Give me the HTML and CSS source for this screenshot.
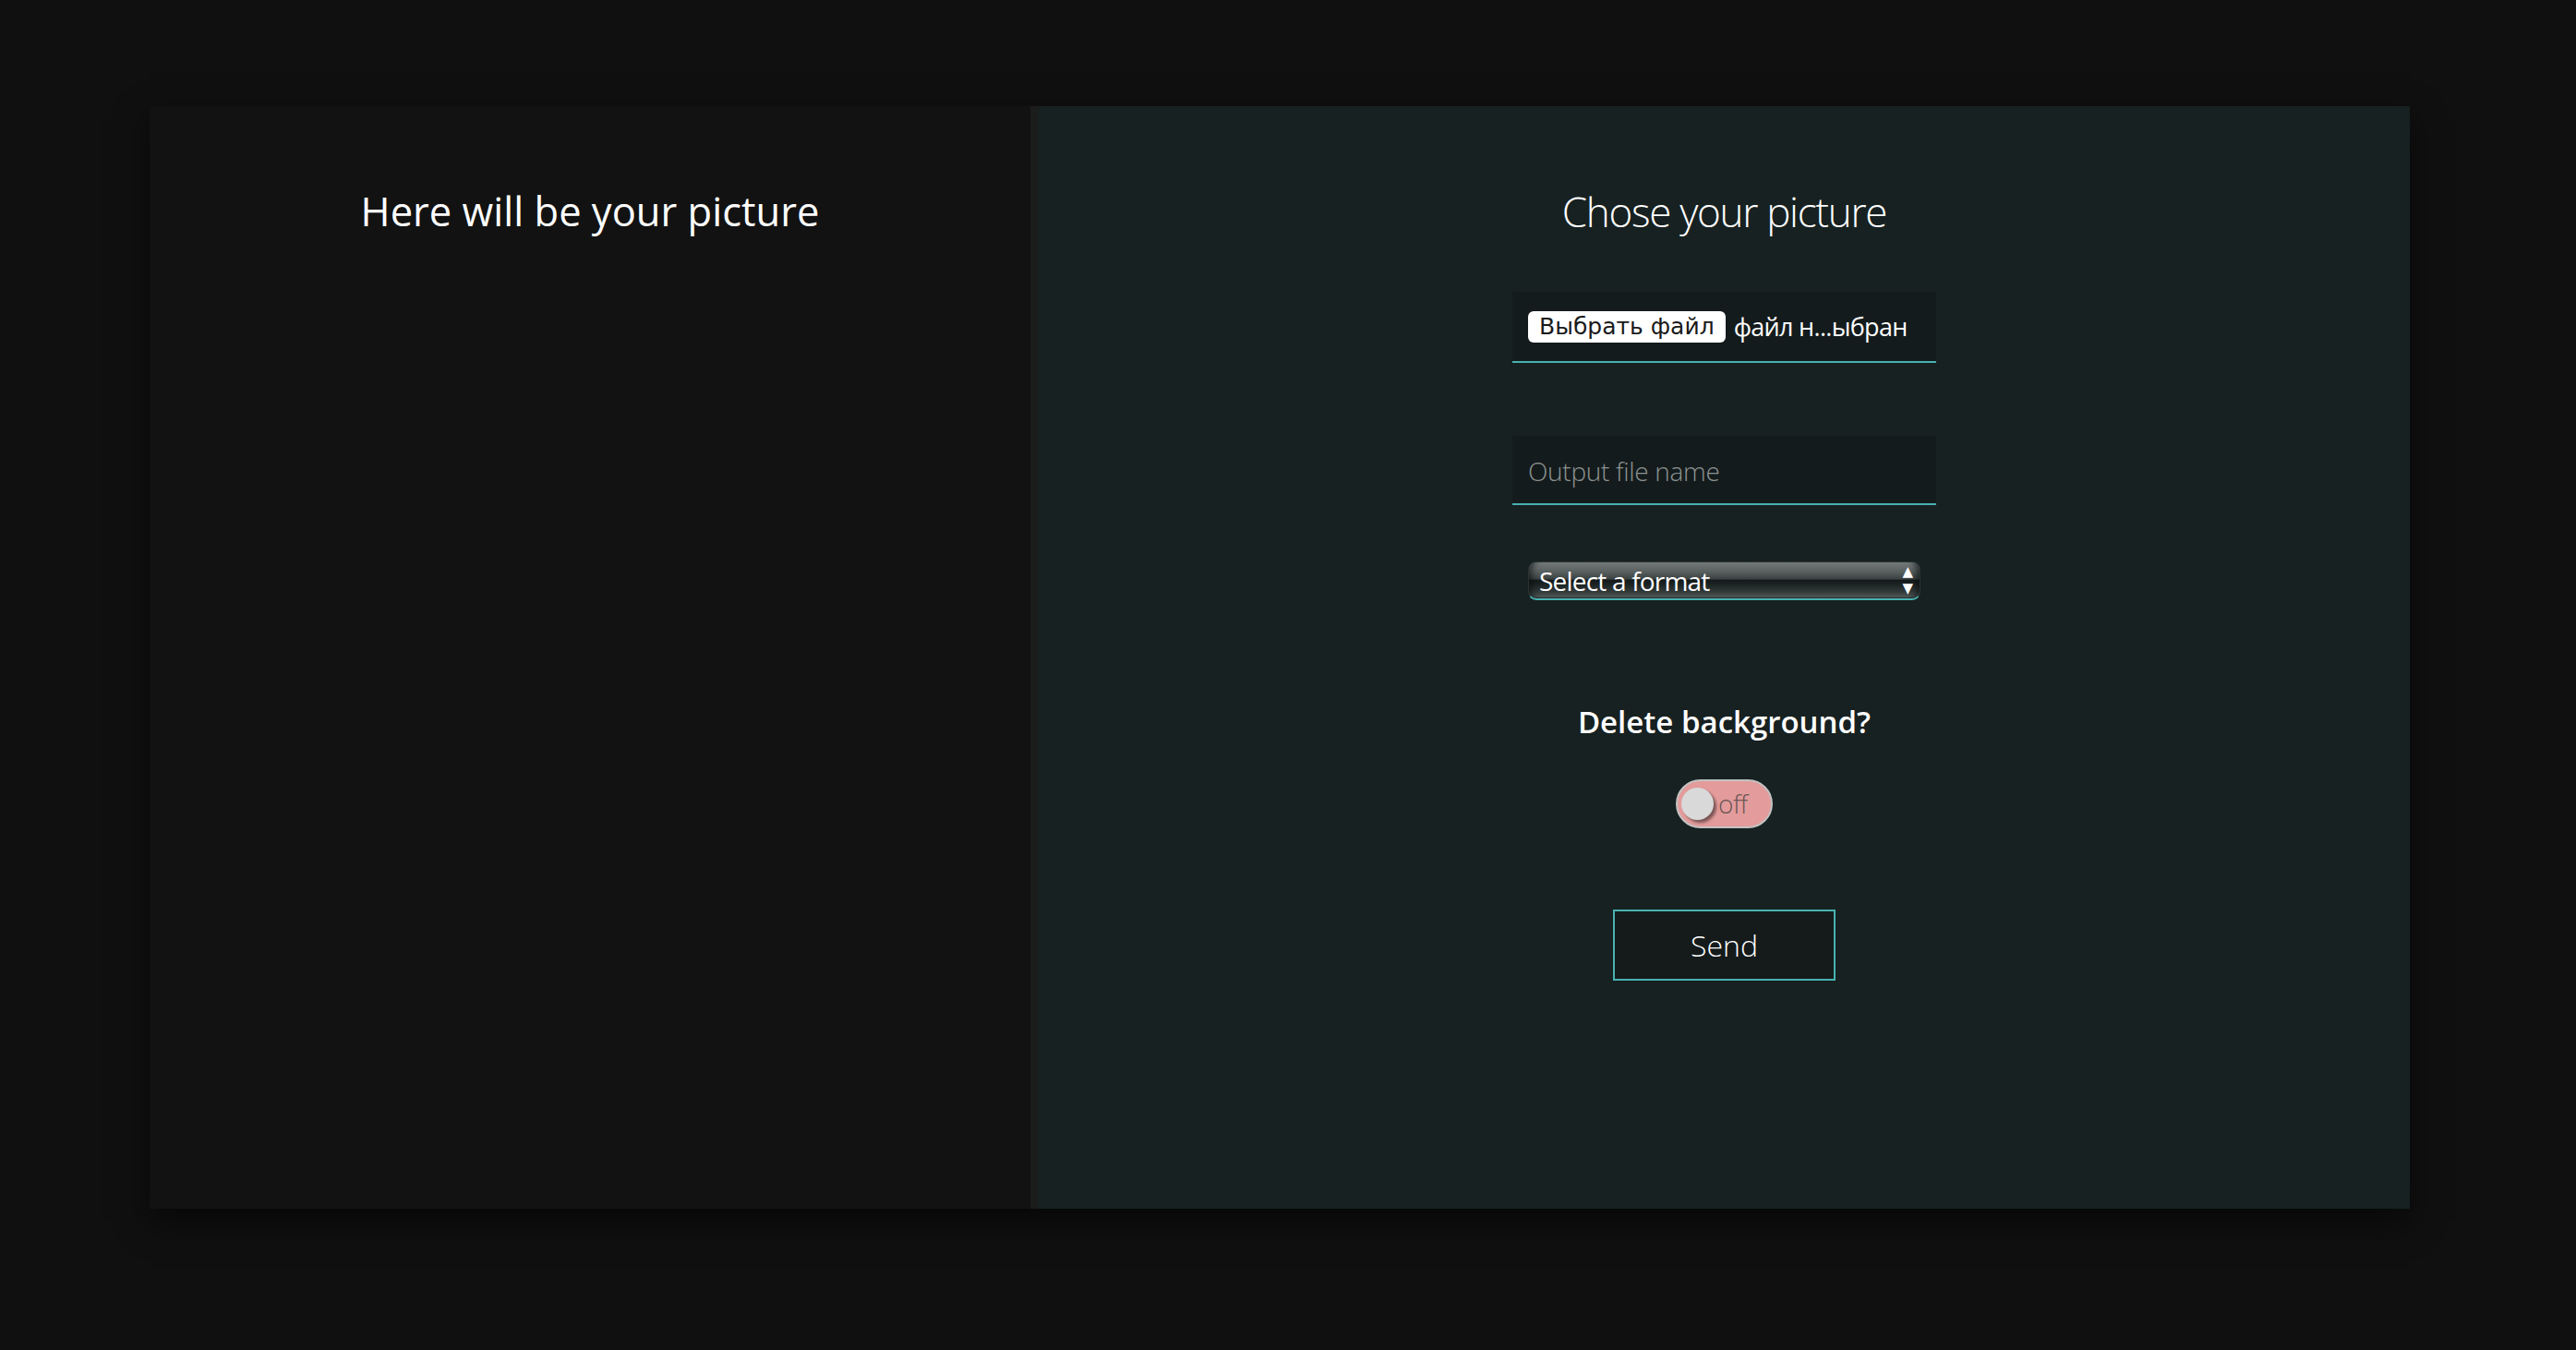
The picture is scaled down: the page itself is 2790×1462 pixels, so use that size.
FILE: index.html
```html
<!DOCTYPE html>
<html lang="ru">
<head>
<meta charset="utf-8">
<title>Picture converter</title>
<link rel="stylesheet" href="styles.css">
</head>
<body>
<div class="page">
  <div class="card">
    <section class="preview">
      <h2 class="title">Here will be your picture</h2>
    </section>
    <section class="form">
      <h2 class="title light">Chose your picture</h2>
      <div class="field file-field">
        <label class="file-btn">Выбрать файл</label>
        <span class="file-name">файл н...ыбран</span>
      </div>
      <div class="field text-field">
        <input class="text-input" type="text" placeholder="Output file name">
      </div>
      <div class="select-wrap">
        <select class="format-select">
          <option>Select a format</option>
        </select>
        <span class="select-arrows"><span>&#9650;</span><span>&#9660;</span></span>
      </div>
      <h3 class="question">Delete background?</h3>
      <div class="toggle">
        <span class="knob"></span>
        <span class="toggle-label">off</span>
      </div>
      <button class="send">Send</button>
    </section>
  </div>
</div>
</body>
</html>
```
FILE: styles.css
```css
html, body {
  margin: 0;
  padding: 0;
}
body {
  background: #101010;
  font-family: "Open Sans", "Noto Sans", sans-serif;
  color: #ffffff;
  width: 2790px;
  height: 1462px;
  overflow: hidden;
}
.page {
  padding: 115px 0 0 162px;
}
.card {
  width: 2448px;
  height: 1194px;
  display: flex;
  box-shadow: 0 14px 34px rgba(0, 0, 0, 0.55);
}
.preview {
  width: 954px;
  background: #121212;
  display: flex;
  flex-direction: column;
  align-items: center;
  padding-top: 84px;
  box-sizing: border-box;
}
.form {
  flex: 1;
  background: #172121;
  border-left: 9px solid #1b1c1c;
  display: flex;
  flex-direction: column;
  align-items: center;
  padding-top: 84px;
  box-sizing: border-box;
}
.title {
  margin: 0;
  font-size: 43.5px;
  font-weight: 400;
  line-height: 60px;
  color: #ffffff;
}
.title.light {
  font-size: 44px;
  font-weight: 300;
  letter-spacing: -1.3px;
}
.field {
  width: 459px;
  height: 77px;
  box-sizing: border-box;
  background: #141b1c;
  border-bottom: 2px solid #48b1b1;
  display: flex;
  align-items: center;
  padding: 0 17px;
}
.file-field {
  margin-top: 57px;
}
.file-btn {
  background: #ffffff;
  color: #1a1a1a;
  font-family: "DejaVu Sans", "Open Sans", sans-serif;
  font-size: 25px;
  line-height: 34px;
  height: 34px;
  padding: 0 12px;
  border-radius: 6px;
  box-sizing: border-box;
  white-space: nowrap;
}
.file-name {
  margin-left: 9px;
  font-size: 27px;
  letter-spacing: -0.7px;
  color: #ffffff;
  white-space: nowrap;
}
.text-field {
  margin-top: 79px;
  height: 75px;
}
.text-input {
  width: 100%;
  background: transparent;
  border: none;
  outline: none;
  padding: 0;
  margin-top: 2px;
  font-family: "Open Sans", sans-serif;
  font-size: 28px;
  letter-spacing: -0.3px;
  color: #ffffff;
}
.text-input::placeholder {
  color: #8c9393;
  font-weight: 300;
}
.select-wrap {
  position: relative;
  margin-top: 61px;
  width: 425px;
  height: 42px;
}
.format-select {
  appearance: none;
  -webkit-appearance: none;
  width: 100%;
  height: 100%;
  box-sizing: border-box;
  border: 1px solid #2a3333;
  border-bottom: 2px solid #48b1b1;
  border-radius: 9px;
  padding: 0 40px 0 11px;
  font-family: "Open Sans", sans-serif;
  font-size: 28px;
  letter-spacing: -0.8px;
  line-height: 38px;
  color: #ffffff;
  background: linear-gradient(to bottom, #747a7a 0%, #5a6161 25%, #3b4242 46%, #141a1b 50%, #1d2424 62%, #333a3a 82%, #4f5656 96%, #1d2424 100%);
  box-shadow: inset 10px 0 6px -6px rgba(10, 15, 15, 0.6), inset -10px 0 6px -6px rgba(10, 15, 15, 0.6);
  outline: none;
}
.select-arrows {
  position: absolute;
  right: 8px;
  top: 2px;
  display: flex;
  flex-direction: column;
  font-family: "DejaVu Sans", sans-serif;
  font-size: 15px;
  line-height: 18px;
  color: #ffffff;
  pointer-events: none;
}
.question {
  margin: 109px 0 0;
  font-size: 33px;
  font-weight: 600;
  line-height: 45px;
  color: #ffffff;
}
.toggle {
  margin-top: 40px;
  width: 105px;
  height: 53px;
  box-sizing: border-box;
  border: 2px solid #c2c2c2;
  border-radius: 27px;
  background: #e39b9b;
  display: flex;
  align-items: center;
  padding-left: 4px;
}
.knob {
  width: 35px;
  height: 35px;
  border-radius: 50%;
  background: #d9d9d9;
  box-shadow: 3px 3px 3px rgba(0, 0, 0, 0.45);
}
.toggle-label {
  margin-left: 5px;
  font-size: 28px;
  font-weight: 300;
  letter-spacing: -0.5px;
  line-height: 1;
  color: #6a5656;
  margin-top: -2px;
}
.send {
  margin-top: 88px;
  width: 241px;
  height: 77px;
  box-sizing: border-box;
  border: 2px solid #48b1b1;
  background: #151b1b;
  color: #ffffff;
  font-family: "Open Sans", sans-serif;
  font-size: 32px;
  font-weight: 300;
  padding: 0;
  cursor: pointer;
}
```
